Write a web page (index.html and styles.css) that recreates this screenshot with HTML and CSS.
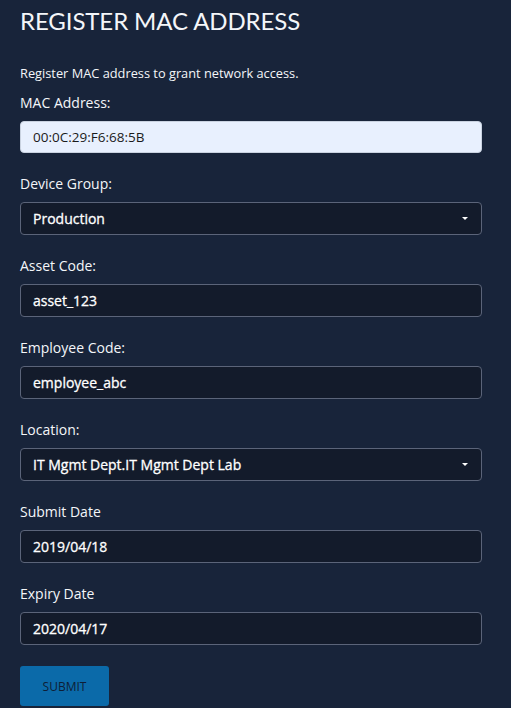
FILE: index.html
```html
<!DOCTYPE html>
<html>
<head>
<meta charset="utf-8">
<link rel="stylesheet" href="styles.css">
</head>
<body>
<div class="page">
  <h1 class="title">REGISTER MAC ADDRESS</h1>
  <p class="desc">Register MAC address to grant network access.</p>
  <form class="form">
    <div class="group">
      <label class="label">MAC Address:</label>
      <div class="field field-auto">00:0C:29:F6:68:5B</div>
    </div>
    <div class="group">
      <label class="label">Device Group:</label>
      <div class="field field-select"><span>Production</span><span class="caret"></span></div>
    </div>
    <div class="group">
      <label class="label">Asset Code:</label>
      <div class="field">asset_123</div>
    </div>
    <div class="group">
      <label class="label">Employee Code:</label>
      <div class="field">employee_abc</div>
    </div>
    <div class="group">
      <label class="label">Location:</label>
      <div class="field field-select"><span>IT Mgmt Dept.IT Mgmt Dept Lab</span><span class="caret"></span></div>
    </div>
    <div class="group">
      <label class="label">Submit Date</label>
      <div class="field">2019/04/18</div>
    </div>
    <div class="group">
      <label class="label">Expiry Date</label>
      <div class="field">2020/04/17</div>
    </div>
    <button type="button" class="btn">SUBMIT</button>
  </form>
</div>
</body>
</html>
```
FILE: styles.css
```css
html, body {
  margin: 0;
  padding: 0;
  background: #18243a;
}
body {
  font-family: "Open Sans", "Noto Sans", sans-serif;
  color: #ffffff;
}
.page {
  width: 462px;
  padding: 6px 0 0 20px;
}
.title {
  font-family: Lato, "Open Sans", sans-serif;
  font-weight: 400;
  font-size: 24px;
  line-height: 29px;
  margin: 0;
  letter-spacing: -0.1px;
  color: #f4f6f9;
}
.desc {
  font-size: 12.8px;
  line-height: 18px;
  margin: 29px 0 11px;
  color: #f4f6f9;
}
.form {
  display: flex;
  flex-direction: column;
}
.group {
  display: flex;
  flex-direction: column;
  margin-bottom: 21px;
}
.label {
  font-size: 14px;
  line-height: 20px;
  margin-bottom: 8px;
  color: #f4f6f9;
}
.field {
  box-sizing: border-box;
  height: 33px;
  border: 1px solid #5b6479;
  border-radius: 4px;
  background: #131b2b;
  padding: 0 12px;
  display: flex;
  align-items: center;
  font-size: 14px;
  font-weight: 400;
  -webkit-text-stroke: 0.3px #ffffff;
  color: #ffffff;
}
.field-auto {
  background: #e8f0fe;
  border-color: #c9d2e0;
  color: #1b1b1b;
  -webkit-text-stroke: 0;
  font-size: 13.5px;
  height: 32px;
}
.field-select {
  justify-content: space-between;
}
.caret {
  width: 0;
  height: 0;
  border-left: 3px solid transparent;
  border-right: 3px solid transparent;
  border-top: 3px solid #ffffff;
  margin-right: 1px;
}
.btn {
  align-self: flex-start;
  width: 89px;
  height: 40px;
  margin-top: 0;
  border: none;
  border-radius: 3px;
  background: #0b6aa9;
  color: #0e1e36;
  font-family: "Open Sans", sans-serif;
  font-size: 12px;
  letter-spacing: 0;
  padding: 0;
}
```
